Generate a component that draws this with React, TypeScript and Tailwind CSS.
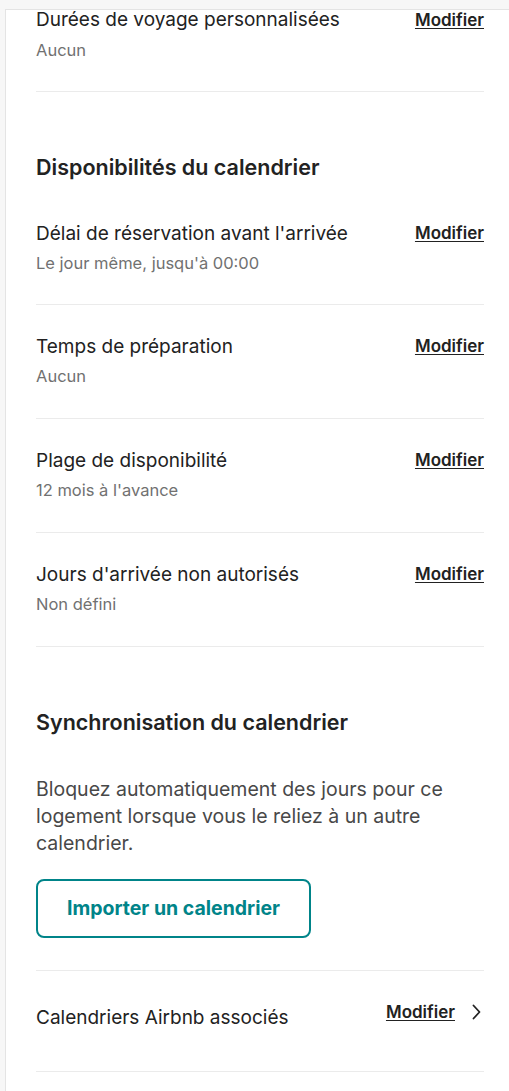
import React from 'react';

const rows = [
  { title: "Délai de réservation avant l'arrivée", value: "Le jour même, jusqu'à 00:00" },
  { title: 'Temps de préparation', value: 'Aucun' },
  { title: 'Plage de disponibilité', value: "12 mois à l'avance" },
  { title: "Jours d'arrivée non autorisés", value: 'Non défini' },
];

const EditLink = () => (
  <button className="text-[17px] leading-6 font-semibold text-[#222222] underline underline-offset-2 shrink-0">
    Modifier
  </button>
);

const SettingRow = ({ title, value, tight }: { title: string; value: string; tight?: boolean }) => (
  <div
    className={`flex items-start justify-between gap-4 pt-[30px] border-b border-[#ebebeb] ${
      tight ? 'pb-[29px]' : 'pb-[30px]'
    }`}
  >
    <div>
      <div className="text-[19px] leading-6 text-[#222222]">{title}</div>
      <div className="mt-[5px] text-[16.5px] leading-6 text-[#717171]">{value}</div>
    </div>
    <div className="-mt-px">
      <EditLink />
    </div>
  </div>
);

export default function App() {
  return (
    <div
      className="min-h-screen bg-[#f7f7f7] pt-[9px] pl-[5px]"
      style={{ fontFamily: 'Inter, "Noto Sans", sans-serif' }}
    >
      <div className="bg-white border-l border-t border-[#e4e4e4] min-h-[1082px] pl-[30px] pr-[25px]">
        {/* Trip lengths, partly scrolled out */}
        <div className="flex items-start justify-between border-b border-[#ebebeb] pb-[29px]">
          <div>
            <div className="text-[19px] leading-5 text-[#222222]">Durées de voyage personnalisées</div>
            <div className="mt-[8px] text-[16.5px] leading-6 text-[#717171]">Aucun</div>
          </div>
          <button className="text-[17px] leading-5 font-semibold text-[#222222] underline underline-offset-2">
            Modifier
          </button>
        </div>

        {/* Calendar availability */}
        <section className="pt-[62px]">
          <h2 className="text-[21.5px] leading-[26px] font-semibold text-[#222222] mb-[12px]">
            Disponibilités du calendrier
          </h2>
          {rows.map((r, i) => (
            <SettingRow key={r.title} title={r.title} value={r.value} tight={i === 0} />
          ))}
        </section>

        {/* Calendar sync */}
        <section className="pt-[62px]">
          <h2 className="text-[21.5px] leading-[26px] font-semibold text-[#222222]">
            Synchronisation du calendrier
          </h2>
          <p className="mt-[41px] text-[19.5px] leading-[27px] text-[#484848] pr-2">
            Bloquez automatiquement des jours pour ce logement lorsque vous le reliez à un autre calendrier.
          </p>
          <button className="mt-[22px] h-[59px] w-[275px] rounded-lg border-2 border-[#008489] text-[19.5px] font-bold text-[#008489]">
            Importer un calendrier
          </button>
          <div className="mt-8 border-t border-[#ebebeb]" />
          <div className="flex items-start justify-between pt-[29px] pb-[41px] border-b border-[#ebebeb]">
            <div className="mt-[6px] text-[19px] leading-6 text-[#222222]">Calendriers Airbnb associés</div>
            <div className="flex items-center gap-[17px] mr-[3px]">
              <EditLink />
              <svg width="9" height="16" viewBox="0 0 9 16" fill="none" className="text-[#222222]">
                <path d="M1.5 1.5l6 6.5-6 6.5" stroke="currentColor" strokeWidth="1.8" strokeLinecap="round" strokeLinejoin="round" />
              </svg>
            </div>
          </div>
        </section>
      </div>
    </div>
  );
}
